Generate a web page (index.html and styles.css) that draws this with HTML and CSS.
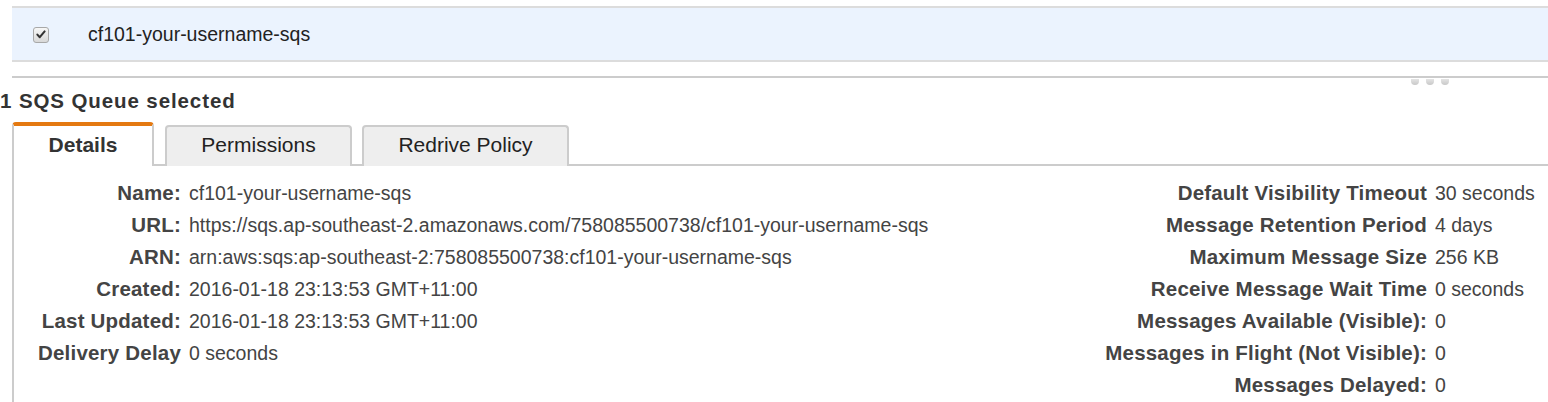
FILE: index.html
```html
<!DOCTYPE html>
<html>
<head>
<meta charset="utf-8">
<link rel="stylesheet" href="styles.css">
</head>
<body>
<div class="queue-row">
  <span class="checkbox">
    <svg viewBox="0 0 15 15" width="15" height="15"><path d="M3.6 7.6 L6.2 10.4 L11.4 4.2" fill="none" stroke="#333" stroke-width="2.2" stroke-linecap="round" stroke-linejoin="round"/></svg>
  </span>
  <span class="queue-name">cf101-your-username-sqs</span>
</div>
<div class="divider">
  <div class="grip"><span></span><span></span><span></span></div>
</div>
<h2 class="selected-title">1 SQS Queue selected</h2>
<div class="tabs">
  <div class="tab active">Details</div>
  <div class="tab">Permissions</div>
  <div class="tab">Redrive Policy</div>
</div>
<div class="panel">
  <div class="details left">
    <div class="label">Name:</div><div class="value">cf101-your-username-sqs</div>
    <div class="label">URL:</div><div class="value">https://sqs.ap-southeast-2.amazonaws.com/758085500738/cf101-your-username-sqs</div>
    <div class="label">ARN:</div><div class="value">arn:aws:sqs:ap-southeast-2:758085500738:cf101-your-username-sqs</div>
    <div class="label">Created:</div><div class="value">2016-01-18 23:13:53 GMT+11:00</div>
    <div class="label">Last Updated:</div><div class="value">2016-01-18 23:13:53 GMT+11:00</div>
    <div class="label">Delivery Delay</div><div class="value">0 seconds</div>
  </div>
  <div class="details right">
    <div class="label">Default Visibility Timeout</div><div class="value">30 seconds</div>
    <div class="label">Message Retention Period</div><div class="value">4 days</div>
    <div class="label">Maximum Message Size</div><div class="value">256 KB</div>
    <div class="label">Receive Message Wait Time</div><div class="value">0 seconds</div>
    <div class="label">Messages Available (Visible):</div><div class="value">0</div>
    <div class="label">Messages in Flight (Not Visible):</div><div class="value">0</div>
    <div class="label">Messages Delayed:</div><div class="value">0</div>
  </div>
</div>
</body>
</html>
```
FILE: styles.css
```css
* { box-sizing: border-box; }
html, body { margin: 0; padding: 0; background: #fff; overflow: hidden; }
body {
  font-family: "Liberation Sans", Arial, Helvetica, sans-serif;
  font-size: 19.5px;
  color: #444;
  height: 402px;
}
.queue-row {
  margin: 6px 0 0 12px;
  height: 56px;
  background: #ebf3fe;
  border-top: 2px solid #dcdcdc;
  border-bottom: 2px solid #dcdcdc;
  display: flex;
  align-items: center;
  padding-left: 21px;
}
.checkbox {
  width: 16px;
  height: 16px;
  border: 1px solid #a8a8a8;
  border-radius: 3px;
  background: linear-gradient(#f7f7f7, #d8d8d8);
  display: flex;
  align-items: center;
  justify-content: center;
  margin-top: 1px;
}
.checkbox svg { display: block; }
.queue-name {
  margin-left: 39px;
  color: #222;
}
.divider {
  position: relative;
  margin: 14px 0 0 12px;
  border-top: 2px solid #cccccc;
}
.grip {
  position: absolute;
  top: 1px;
  left: 1399px;
  display: flex;
  gap: 7px;
}
.grip span {
  width: 8px;
  height: 6px;
  border-radius: 0 0 4px 4px;
  background: linear-gradient(#e4e4e4, #c8c8c8);
}
.selected-title {
  margin: 11px 0 0 0;
  font-size: 20.5px;
  line-height: 24px;
  font-weight: bold;
  letter-spacing: 0.9px;
  color: #333;
}
.tabs {
  display: flex;
  align-items: flex-end;
  margin: 9px 0 0 12px;
  height: 44px;
  border-bottom: 2px solid #cccccc;
}
.tab {
  height: 41px;
  margin-bottom: -2px;
  margin-right: 10px;
  background: #eeeeee;
  border: 2px solid #cccccc;
  border-bottom: none;
  border-radius: 4px 4px 0 0;
  display: flex;
  align-items: center;
  justify-content: center;
  color: #222;
  font-size: 21px;
  line-height: 24px;
  padding: 0 0 3px;
}
.tab.active {
  height: 44px;
  width: 142px;
  padding: 0 0 3px;
  background: #fff;
  border-top: 4px solid #e47911;
  font-weight: bold;
  color: #333;
  margin-right: 11px;
}
.tab:nth-child(2) { width: 187px; }
.tab:nth-child(3) { width: 207px; }
.panel {
  margin-left: 12px;
  border-left: 2px solid #cccccc;
  padding-top: 11px;
  display: flex;
  justify-content: space-between;
  height: 240px;
}
.details {
  display: grid;
  column-gap: 8px;
  grid-auto-rows: 32px;
  align-content: start;
}
.details .label,
.details .value { line-height: 32px; white-space: nowrap; }
.details .label { text-align: right; font-weight: bold; color: #444; font-size: 20.5px; letter-spacing: 0.2px; }
.details .value { color: #444; }
.left { grid-template-columns: 167px auto; }
.right { grid-template-columns: 330px 113px; }
```
